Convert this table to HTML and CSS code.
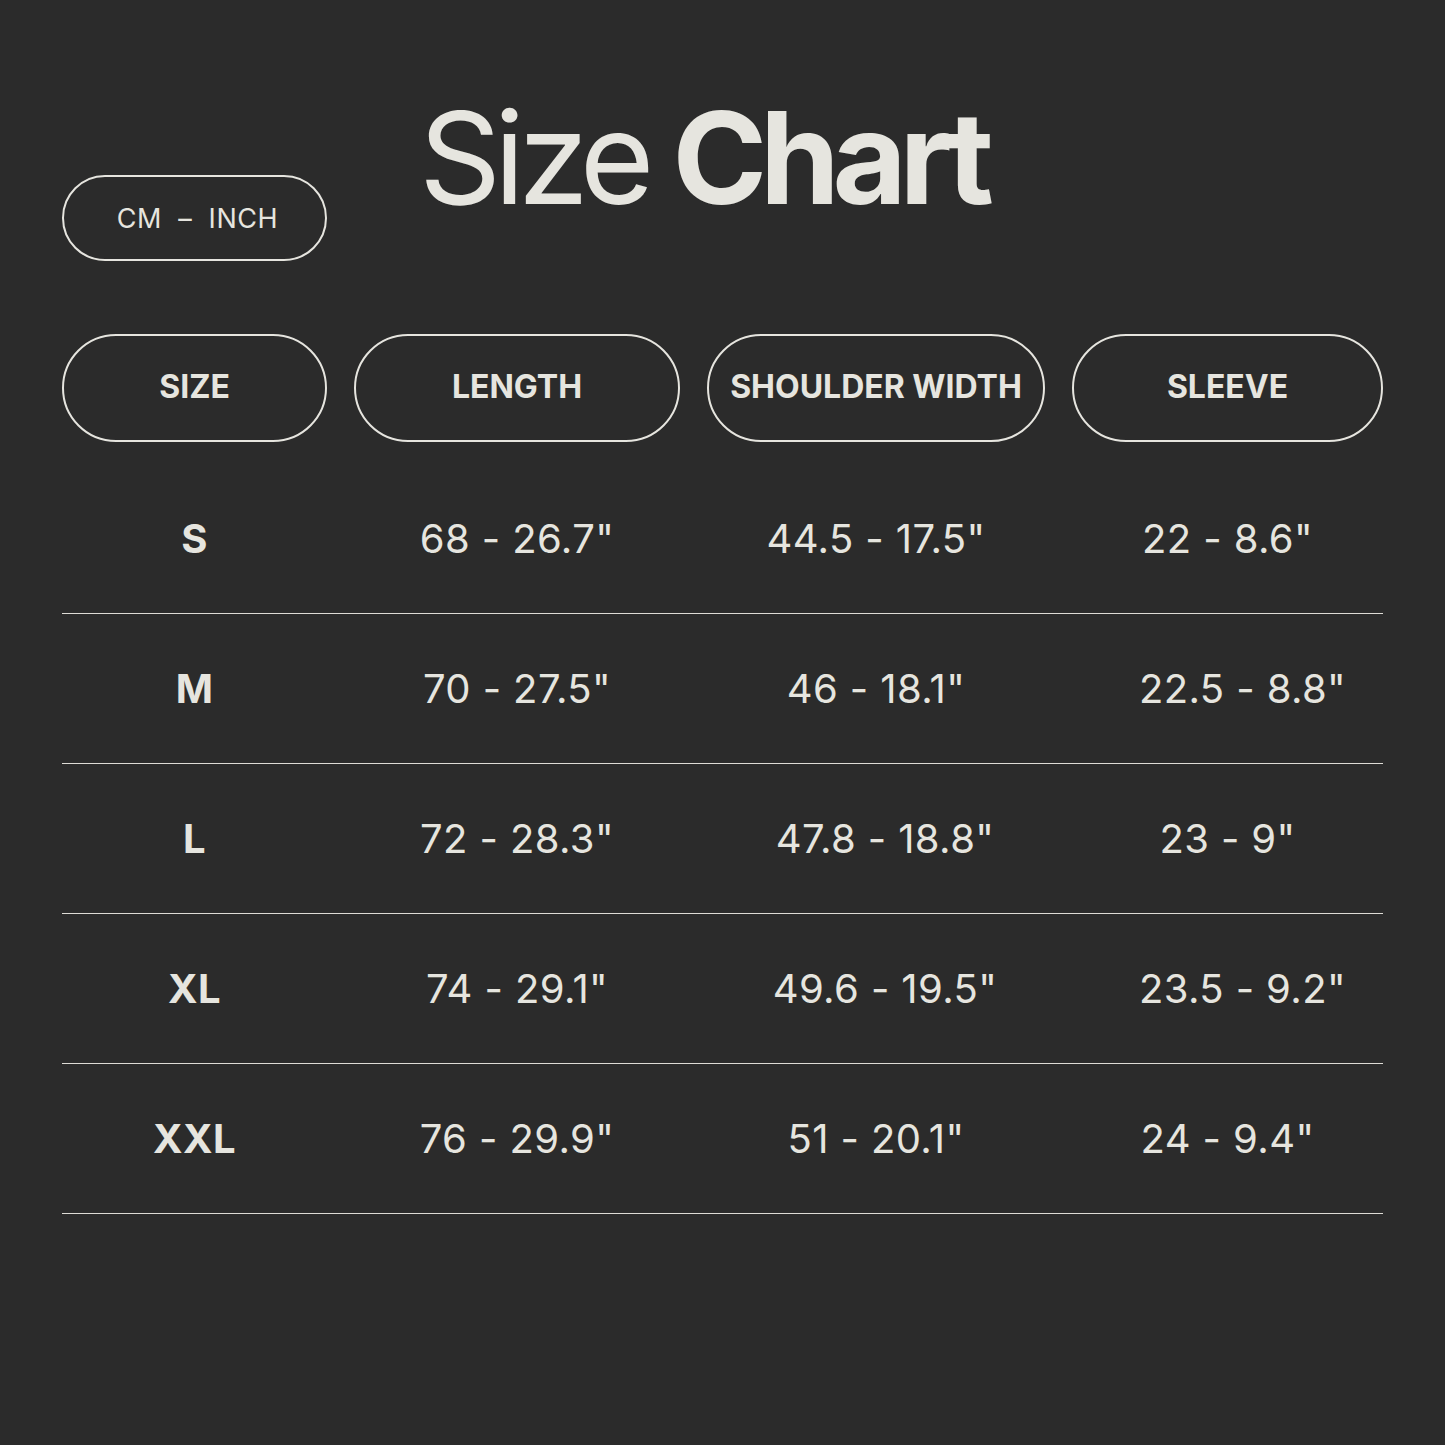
FILE: index.html
```html
<!DOCTYPE html>
<html lang="en">
<head>
<meta charset="utf-8">
<title>Size Chart</title>
<link rel="stylesheet" href="styles.css">
</head>
<body>
<main class="chart">
  <header class="top">
    <div class="unit-pill">CM &nbsp;–&nbsp; INCH</div>
    <h1 class="title"><span class="title-light">Size</span> <span class="title-bold">Chart</span></h1>
  </header>
  <section class="table">
    <div class="head-row">
      <div class="head-pill">SIZE</div>
      <div class="head-pill">LENGTH</div>
      <div class="head-pill">SHOULDER WIDTH</div>
      <div class="head-pill">SLEEVE</div>
    </div>
    <div class="row">
      <div class="cell size">S</div>
      <div class="cell">68 - 26.7"</div>
      <div class="cell">44.5 - 17.5"</div>
      <div class="cell">22 - 8.6"</div>
    </div>
    <div class="row">
      <div class="cell size">M</div>
      <div class="cell">70 - 27.5"</div>
      <div class="cell">46 - 18.1"</div>
      <div class="cell nudge-l">22.5 - 8.8"</div>
    </div>
    <div class="row">
      <div class="cell size">L</div>
      <div class="cell">72 - 28.3"</div>
      <div class="cell nudge-s">47.8 - 18.8"</div>
      <div class="cell">23 - 9"</div>
    </div>
    <div class="row">
      <div class="cell size">XL</div>
      <div class="cell">74 - 29.1"</div>
      <div class="cell nudge-s">49.6 - 19.5"</div>
      <div class="cell nudge-l">23.5 - 9.2"</div>
    </div>
    <div class="row">
      <div class="cell size">XXL</div>
      <div class="cell">76 - 29.9"</div>
      <div class="cell">51 - 20.1"</div>
      <div class="cell">24 - 9.4"</div>
    </div>
  </section>
</main>
</body>
</html>
```
FILE: styles.css
```css
html, body {
  margin: 0;
  padding: 0;
  background: #2b2b2b;
}
body {
  width: 1445px;
  height: 1445px;
  color: #e6e5df;
  font-family: Inter, "Noto Sans", "Liberation Sans", sans-serif;
}
.chart {
  padding: 93px 62px 0 62px;
}
.top {
  display: flex;
  align-items: flex-start;
  margin-bottom: 73px;
}
.unit-pill {
  box-sizing: border-box;
  width: 265px;
  height: 86px;
  margin-top: 82px;
  padding-left: 6px;
  border: 2px solid #e6e5df;
  border-radius: 43px;
  display: flex;
  align-items: center;
  justify-content: center;
  font-size: 27px;
  font-weight: 400;
  letter-spacing: 0.02em;
  white-space: pre;
}
.title {
  margin: 0 0 0 92px;
  font-size: 128px;
  line-height: 130px;
  font-weight: 400;
  letter-spacing: -0.055em;
  word-spacing: -4px;
  white-space: nowrap;
}
.title-bold {
  font-weight: 700;
  letter-spacing: -0.056em;
}
.head-row,
.row {
  display: grid;
  grid-template-columns: 265px 326px 338px 311px;
  column-gap: 27px;
}
.head-row {
  margin-bottom: 22px;
}
.head-pill {
  box-sizing: border-box;
  height: 108px;
  padding-bottom: 3px;
  border: 2px solid #e6e5df;
  border-radius: 54px;
  display: flex;
  align-items: center;
  justify-content: center;
  font-size: 32px;
  font-weight: 700;
  white-space: nowrap;
}
.row {
  height: 149px;
  border-bottom: 1px solid #dedcd6;
  align-items: center;
}
.cell {
  text-align: center;
  font-size: 40px;
  font-weight: 400;
  letter-spacing: 0.01em;
  white-space: nowrap;
}
.cell.size {
  font-weight: 700;
}
.nudge-s {
  padding-left: 18px;
}
.nudge-l {
  padding-left: 30px;
}
```
